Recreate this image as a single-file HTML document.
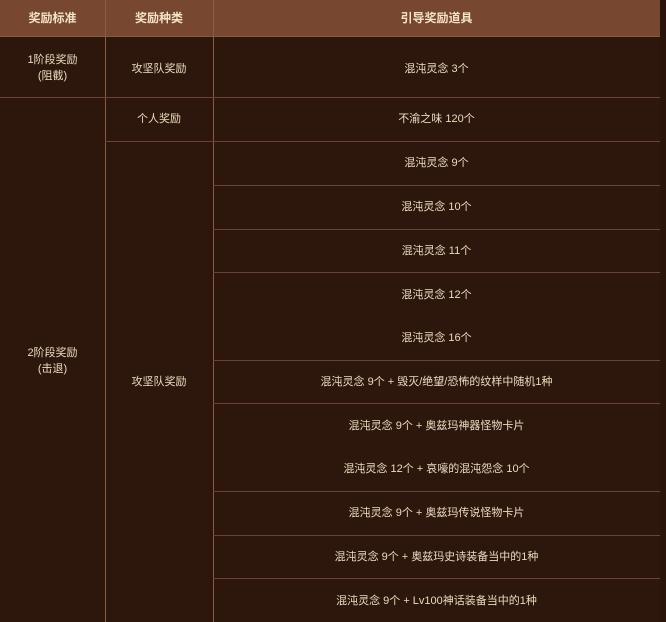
<!DOCTYPE html>
<html><head><meta charset="utf-8"><style>
body{margin:0;width:666px;height:622px;background:#2d160b;overflow:hidden;font-family:"Liberation Sans","Noto Sans CJK SC",sans-serif;font-size:11px;color:#eadbc0;position:relative}
.h{position:absolute;top:0;left:0;width:660px;height:36px;background:#77482f;border-bottom:1px solid #8a5a40}
.t{position:absolute;text-align:center;line-height:16px}
.hl{position:absolute;height:1px;background:#6b4332}
.vl{position:absolute;width:1px;background:#6e4c3c}
.b{font-weight:bold;color:#f3e4c8;font-size:12px}
.r{position:absolute;left:660px;top:0;width:6px;height:622px;background:#2a1409}
</style></head><body>
<div class="h"></div>
<div class="vl" style="left:105px;top:0;height:622px;background:#8a5a44"></div>
<div class="vl" style="left:213px;top:0;height:622px;background:#8a5a44"></div>
<div class="vl" style="left:105px;top:0;height:37px;background:#8d5d42"></div>
<div class="vl" style="left:213px;top:0;height:37px;background:#8d5d42"></div>
<div class="hl" style="left:0;width:660px;top:97px"></div>
<div class="hl" style="left:105px;width:555px;top:141px"></div>
<div class="hl" style="left:213px;width:447px;top:185px"></div>
<div class="hl" style="left:213px;width:447px;top:229px"></div>
<div class="hl" style="left:213px;width:447px;top:272px"></div>
<div class="hl" style="left:213px;width:447px;top:360px"></div>
<div class="hl" style="left:213px;width:447px;top:403px"></div>
<div class="hl" style="left:213px;width:447px;top:491px"></div>
<div class="hl" style="left:213px;width:447px;top:535px"></div>
<div class="hl" style="left:213px;width:447px;top:578px"></div>
<div class="r"></div>
<div class="t b" style="left:0;width:105px;top:10px">奖励标准</div>
<div class="t b" style="left:105px;width:108px;top:10px">奖励种类</div>
<div class="t b" style="left:213px;width:447px;top:10px">引导奖励道具</div>
<div class="t" style="left:0;width:105px;top:52px">1阶段奖励<br>(阻截)</div>
<div class="t" style="left:105px;width:108px;top:61px">攻坚队奖励</div>
<div class="t" style="left:213px;width:447px;top:61px">混沌灵念 3个</div>
<div class="t" style="left:0;width:105px;top:345px">2阶段奖励<br>(击退)</div>
<div class="t" style="left:105px;width:108px;top:111px">个人奖励</div>
<div class="t" style="left:213px;width:447px;top:111px">不渝之味 120个</div>
<div class="t" style="left:105px;width:108px;top:374px">攻坚队奖励</div>
<div class="t" style="left:213px;width:447px;top:155px">混沌灵念 9个</div>
<div class="t" style="left:213px;width:447px;top:199px">混沌灵念 10个</div>
<div class="t" style="left:213px;width:447px;top:243px">混沌灵念 11个</div>
<div class="t" style="left:213px;width:447px;top:287px">混沌灵念 12个</div>
<div class="t" style="left:213px;width:447px;top:330px">混沌灵念 16个</div>
<div class="t" style="left:213px;width:447px;top:374px">混沌灵念 9个 + 毁灭/绝望/恐怖的纹样中随机1种</div>
<div class="t" style="left:213px;width:447px;top:418px">混沌灵念 9个 + 奥兹玛神器怪物卡片</div>
<div class="t" style="left:213px;width:447px;top:461px">混沌灵念 12个 + 哀嚎的混沌怨念 10个</div>
<div class="t" style="left:213px;width:447px;top:505px">混沌灵念 9个 + 奥兹玛传说怪物卡片</div>
<div class="t" style="left:213px;width:447px;top:549px">混沌灵念 9个 + 奥兹玛史诗装备当中的1种</div>
<div class="t" style="left:213px;width:447px;top:593px">混沌灵念 9个 + Lv100神话装备当中的1种</div>
</body></html>
